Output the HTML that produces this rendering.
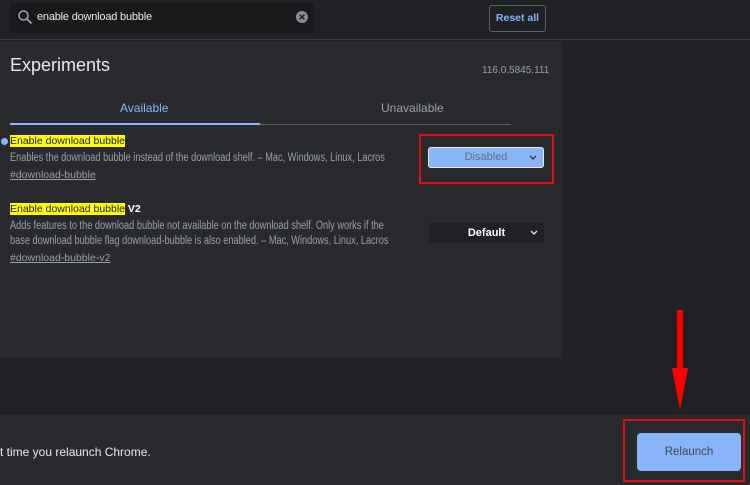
<!DOCTYPE html>
<html><head><style>
*{margin:0;padding:0;box-sizing:border-box}
body{width:750px;height:485px;background:#202124;font-family:"Liberation Sans",sans-serif;position:relative;overflow:hidden;color:#e8eaed}
.a{position:absolute}
.hl{background:#ffff00;color:#202124}
.desc{font-size:11.5px;color:#9aa0a6;line-height:15px;white-space:nowrap;transform:scaleX(0.8);transform-origin:0 0}
.link{font-size:10.5px;color:#9aa0a6;text-decoration:underline}
.chev{position:absolute;right:6px;top:50%;margin-top:-3px}
</style></head><body>
<div class="a" style="left:0;top:0;width:750px;height:40px;background:#202124;border-bottom:1px solid #3c3d40"></div>
<div class="a" style="left:10px;top:3px;width:304px;height:30px;background:#18191b;border-radius:3px"></div>
<svg class="a" style="left:17px;top:9px" width="16" height="16" viewBox="0 0 16 16"><circle cx="6.5" cy="6.5" r="4.5" fill="none" stroke="#9aa0a6" stroke-width="1.6"/><path d="M10 10l4.5 4.5" stroke="#9aa0a6" stroke-width="1.8"/></svg>
<div class="a" style="left:37px;top:11px;font-size:11px;color:#e8eaed;letter-spacing:-0.2px">enable download bubble</div>
<svg class="a" style="left:295px;top:10px" width="14" height="14"><circle cx="7" cy="7" r="6" fill="#8a8d92"/><path d="M4.5 4.5l5 5M9.5 4.5l-5 5" stroke="#202124" stroke-width="1.4"/></svg>
<div class="a" style="left:489px;top:5px;width:57px;height:27px;border:1px solid #5f6368;border-radius:3px;font-size:10.5px;font-weight:bold;color:#8ab4f8;text-align:center;line-height:25px">Reset all</div>
<div class="a" style="left:0;top:41px;width:562px;height:317px;background:#292a2d"></div>
<div class="a" style="left:10px;top:55px;font-size:18px;color:#e8eaed">Experiments</div>
<div class="a" style="left:482px;top:65px;font-size:10px;color:#9aa0a6">116.0.5845.111</div>
<div class="a" style="left:120px;top:101px;font-size:12px;color:#8ab4f8">Available</div>
<div class="a" style="left:381px;top:101px;font-size:12px;color:#9aa0a6">Unavailable</div>
<div class="a" style="left:10px;top:124px;width:501px;height:1px;background:#5f6368"></div>
<div class="a" style="left:10px;top:123px;width:250px;height:2px;background:#8ab4f8"></div>
<div class="a" style="left:1px;top:138px;width:7px;height:7px;border-radius:50%;background:#8ab4f8"></div>
<div class="a" style="left:10px;top:135px;font-size:10.5px"><span class="hl">Enable download bubble</span></div>
<div class="a desc" style="left:10px;top:151px">Enables the download bubble instead of the download shelf. – Mac, Windows, Linux, Lacros</div>
<div class="a link" style="left:10px;top:169px">#download-bubble</div>
<div class="a" style="left:419px;top:134px;width:135px;height:50px;border:2px solid #e0101a"></div>
<div class="a" style="left:428px;top:147px;width:116px;height:21px;background:#8ab4f8;border:1.5px solid #e8eaed;border-radius:3px;font-size:11px;color:#5f6e8a;text-align:center;line-height:19px">Disabled<svg class="chev" width="8" height="5"><path d="M1 1l3 3 3-3" fill="none" stroke="#303134" stroke-width="1.3"/></svg></div>
<div class="a" style="left:10px;top:203px;font-size:10.5px"><span class="hl">Enable download bubble</span><b style="color:#fff"> V2</b></div>
<div class="a desc" style="left:10px;top:219px">Adds features to the download bubble not available on the download shelf. Only works if the<br>base download bubble flag download-bubble is also enabled. – Mac, Windows, Linux, Lacros</div>
<div class="a link" style="left:10px;top:252px">#download-bubble-v2</div>
<div class="a" style="left:429px;top:223px;width:115px;height:20px;background:#202124;font-size:11px;font-weight:bold;color:#fff;text-align:center;line-height:20px">Default<svg class="chev" width="8" height="5"><path d="M1 1l3 3 3-3" fill="none" stroke="#e8eaed" stroke-width="1.3"/></svg></div>
<div class="a" style="left:0;top:415px;width:750px;height:70px;background:#292a2d"></div>
<div class="a" style="left:0;top:445px;font-size:12px;color:#e8eaed">t time you relaunch Chrome.</div>
<div class="a" style="left:623px;top:419px;width:122px;height:63px;border:2px solid #e0101a"></div>
<div class="a" style="left:637px;top:433px;width:104px;height:38px;background:#8ab4f8;border-radius:4px;font-size:11.5px;color:#3c4a5e;text-align:center;line-height:38px">Relaunch</div>
<svg class="a" style="left:668px;top:308px" width="24" height="104"><path d="M9 2h6v60h-6z" fill="#f00"/><path d="M4 60h16L12 102z" fill="#f00"/></svg>
</body></html>
